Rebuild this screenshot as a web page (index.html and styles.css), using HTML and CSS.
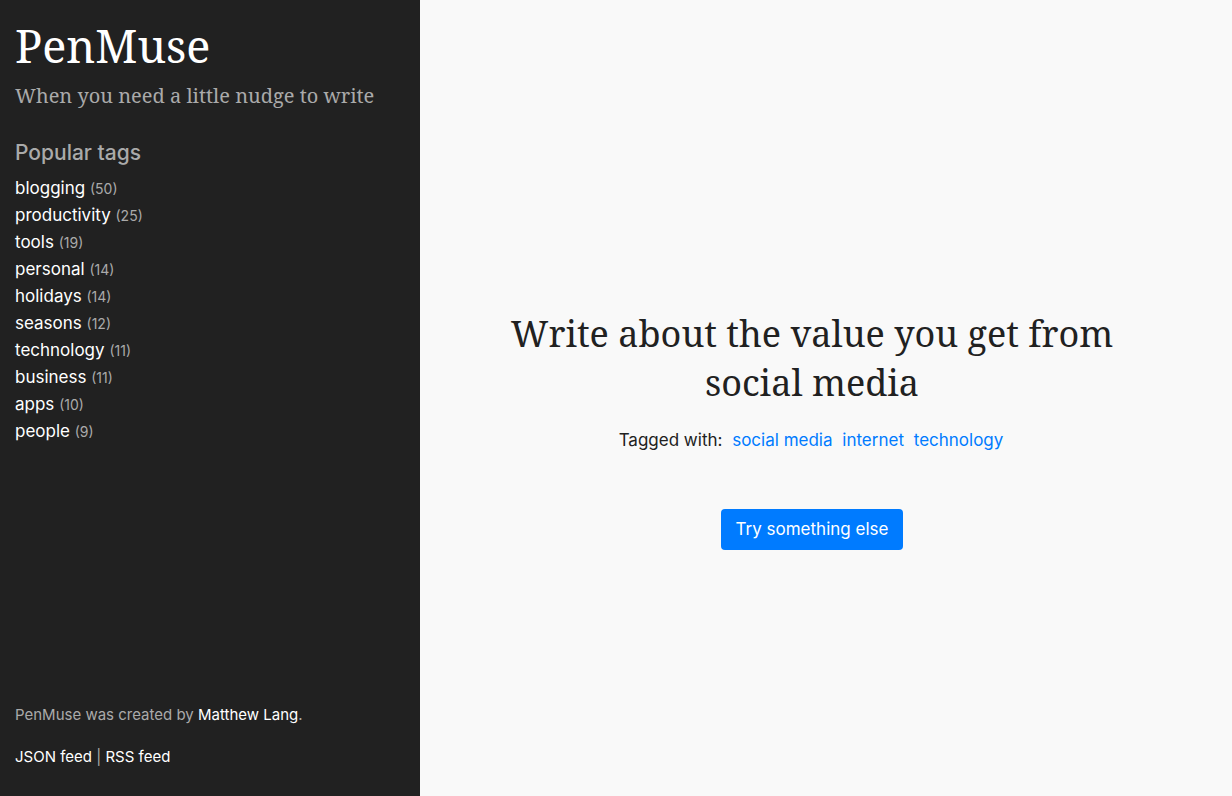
FILE: index.html
```html
<!DOCTYPE html>
<html lang="en">
<head>
<meta charset="utf-8">
<title>PenMuse</title>
<link rel="stylesheet" href="styles.css">
</head>
<body>
<div class="layout">
  <aside class="sidebar">
    <div class="brand">
      <h1 class="site-title">PenMuse</h1>
      <p class="tagline">When you need a little nudge to write</p>
    </div>
    <section class="tags">
      <h2 class="tags-title">Popular tags</h2>
      <ul class="tag-list">
        <li><a href="#">blogging</a> <span class="count">(50)</span></li>
        <li><a href="#">productivity</a> <span class="count">(25)</span></li>
        <li><a href="#">tools</a> <span class="count">(19)</span></li>
        <li><a href="#">personal</a> <span class="count">(14)</span></li>
        <li><a href="#">holidays</a> <span class="count">(14)</span></li>
        <li><a href="#">seasons</a> <span class="count">(12)</span></li>
        <li><a href="#">technology</a> <span class="count">(11)</span></li>
        <li><a href="#">business</a> <span class="count">(11)</span></li>
        <li><a href="#">apps</a> <span class="count">(10)</span></li>
        <li><a href="#">people</a> <span class="count">(9)</span></li>
      </ul>
    </section>
    <footer class="side-footer">
      <p class="credit">PenMuse was created by <a href="#">Matthew Lang</a>.</p>
      <p class="feeds"><a href="#">JSON feed</a> <span class="sep">|</span> <a href="#">RSS feed</a></p>
    </footer>
  </aside>
  <main class="main">
    <div class="prompt">
      <h2 class="prompt-title">Write about the value you get from social media</h2>
      <p class="prompt-tags">Tagged with: <a href="#">social media</a> <a href="#">internet</a> <a href="#">technology</a></p>
      <button class="btn">Try something else</button>
    </div>
  </main>
</div>
</body>
</html>
```
FILE: styles.css
```css
html, body {
  margin: 0;
  padding: 0;
  height: 100%;
}
body {
  font-family: Inter, "Liberation Sans", sans-serif;
  background: #f9f9f9;
  color: #212121;
}
a { text-decoration: none; }
.layout {
  display: flex;
  height: 100vh;
}
.sidebar {
  width: 420px;
  flex: none;
  background: #212121;
  box-sizing: border-box;
  padding: 18px 15px 29px;
  display: flex;
  flex-direction: column;
}
.site-title {
  font-family: "Noto Serif", "DejaVu Serif", "Liberation Serif", serif;
  font-weight: 400;
  font-size: 45px;
  line-height: 56px;
  color: #fff;
  margin: 0;
}
.tagline {
  font-family: "Noto Serif", "DejaVu Serif", "Liberation Serif", serif;
  font-size: 20px;
  line-height: 28px;
  color: #aaaaaa;
  margin: 8px 0 0;
}
.tags { margin-top: 31px; }
.tags-title {
  font-size: 21px;
  font-weight: 500;
  color: #aaaaaa;
  margin: 0 0 10px;
  line-height: 24px;
}
.tag-list {
  list-style: none;
  margin: 0;
  padding: 0;
}
.tag-list li {
  font-size: 17px;
  line-height: 27px;
  height: 27px;
}
.tag-list a { color: #fff; }
.count {
  font-size: 14px;
  line-height: 1;
  color: #aaaaaa;
}
.side-footer {
  margin-top: auto;
  font-size: 15px;
}
.credit {
  color: #aaaaaa;
  margin: 0 0 22px;
  line-height: 20px;
}
.credit a { color: #fff; }
.feeds {
  margin: 0;
  color: #aaaaaa;
  line-height: 20px;
}
.feeds a { color: #fff; }
.main {
  flex: 1;
  display: flex;
  align-items: center;
  justify-content: center;
  padding-right: 28px;
}
.prompt {
  text-align: center;
  max-width: 640px;
  margin-top: 62px;
}
.prompt-title {
  font-family: "Noto Serif", "DejaVu Serif", "Liberation Serif", serif;
  font-weight: 400;
  font-size: 36px;
  line-height: 49px;
  margin: 0 0 23px;
  color: #212121;
}
.prompt-tags {
  font-size: 17px;
  margin: 0 0 59px;
  padding-right: 2px;
}
.prompt-tags a {
  color: #007bff;
  margin-left: 5px;
}
.btn {
  font-family: inherit;
  font-size: 17px;
  color: #fff;
  background: #007bff;
  border: none;
  border-radius: 4px;
  padding: 0 15px;
  height: 41px;
  cursor: pointer;
}
```
